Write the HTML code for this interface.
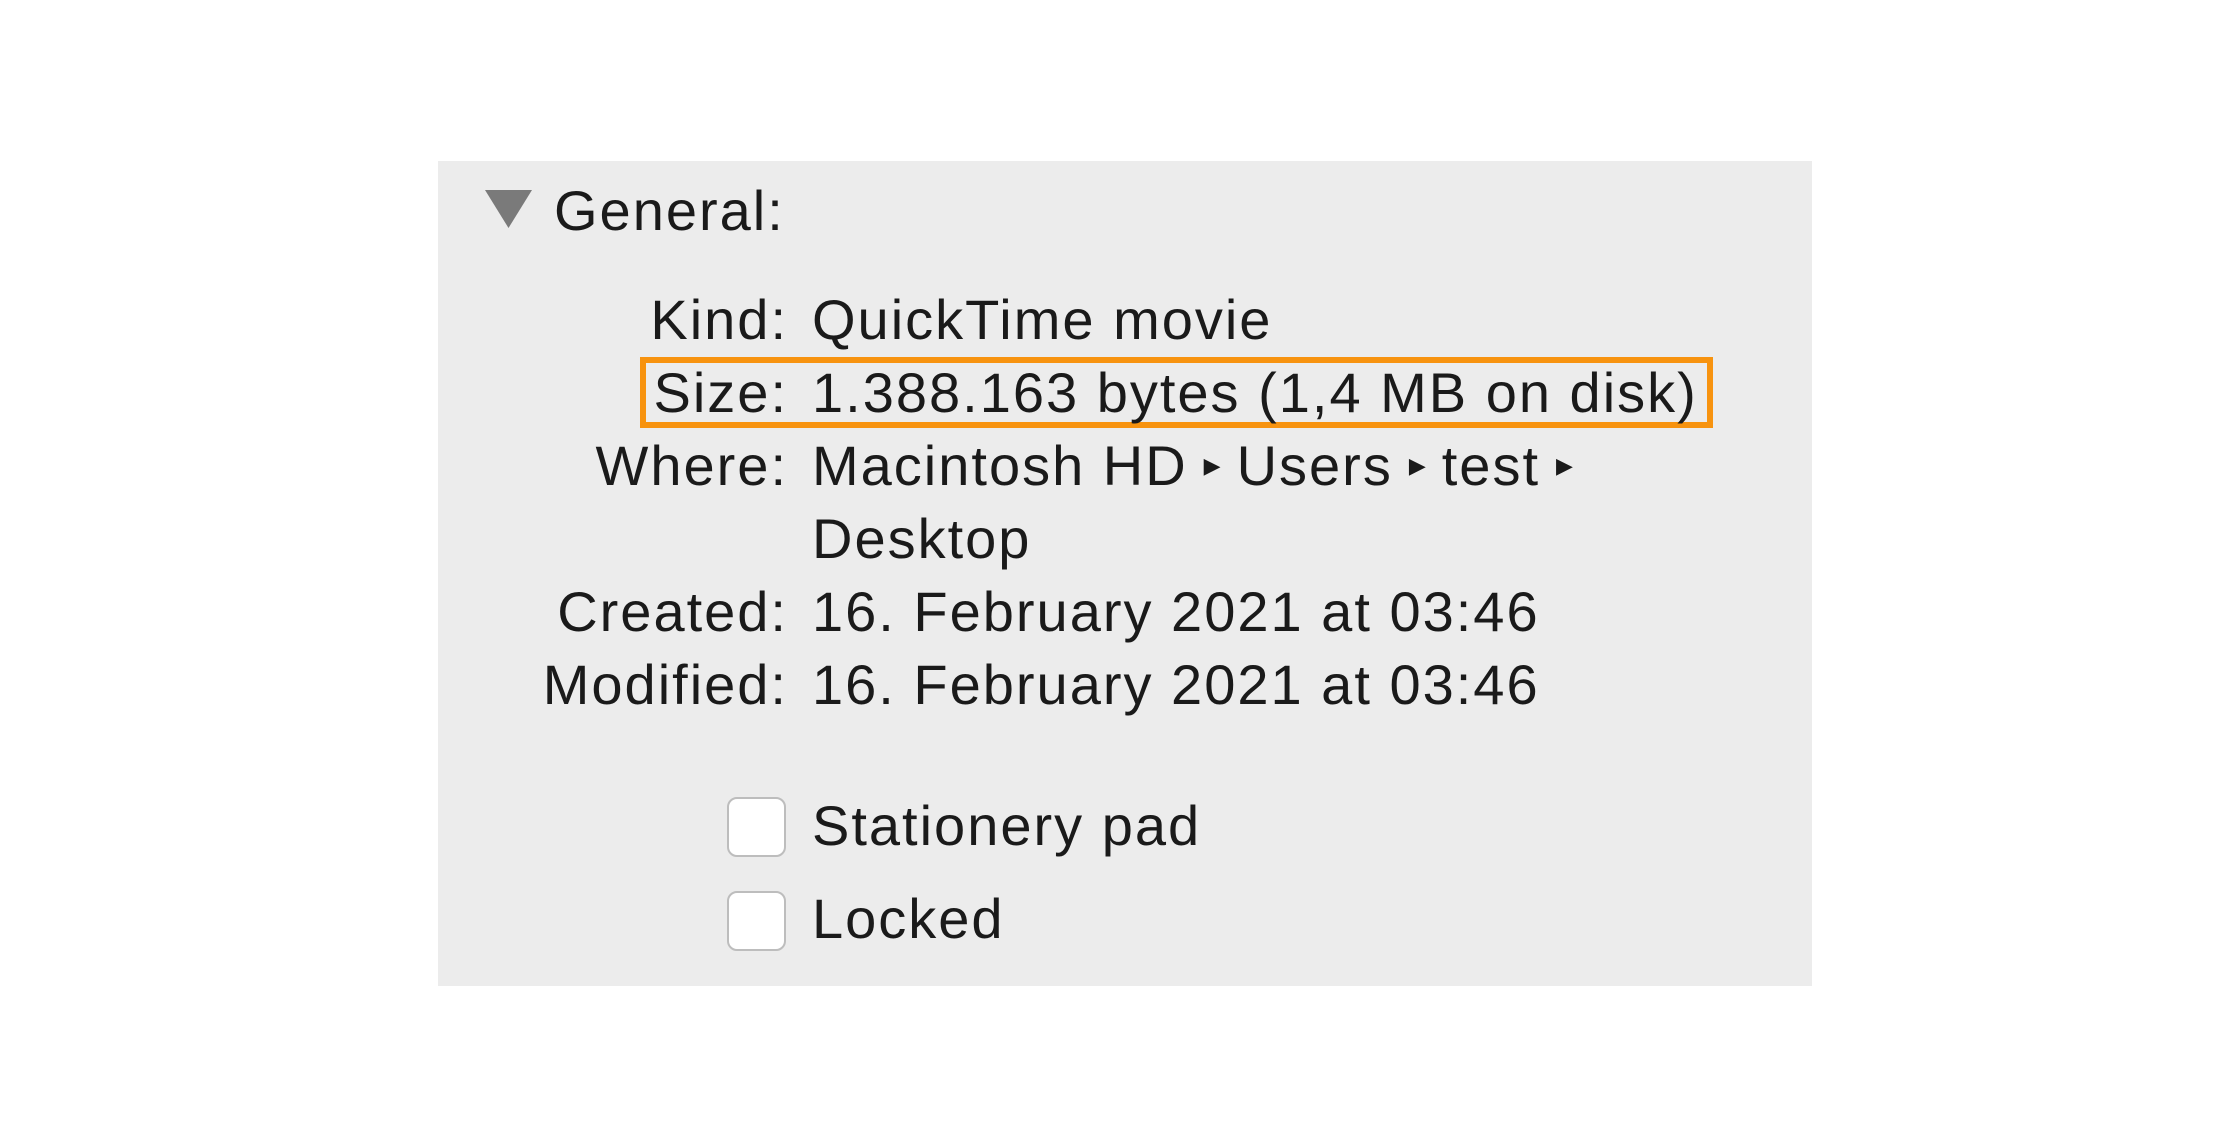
<!DOCTYPE html>
<html><head><meta charset="utf-8"><style>
html,body{margin:0;padding:0;background:#fff;width:2220px;height:1137px;overflow:hidden}
body{position:relative;font-family:"Liberation Sans",sans-serif;color:#1a1a1a}
.panel{position:absolute;left:438px;top:161px;width:1374px;height:825px;background:#ececec}
.t{position:absolute;font-size:56px;line-height:1;white-space:nowrap;letter-spacing:2px}
.lab{position:absolute;right:1432px;text-align:right;font-size:56px;white-space:nowrap;line-height:1;letter-spacing:2px}
.val{position:absolute;left:812px;font-size:56px;white-space:nowrap;line-height:1;letter-spacing:2px}
.box{position:absolute;left:640px;top:357px;width:1073px;height:71px;border:6px solid #f7930f;box-sizing:border-box}
.cb{position:absolute;left:727px;width:59px;height:60px;background:#fff;border:2px solid #bdbdbd;border-radius:10px;box-sizing:border-box}
.arr{font-size:22px;vertical-align:middle;position:relative;top:-4px;margin:0 16px;letter-spacing:0}
</style></head><body>
<div class="panel"></div>
<svg style="position:absolute;left:485px;top:190px" width="47" height="38"><polygon points="0,0 47,0 23.5,38" fill="#7a7a7a"/></svg>
<div class="t" style="left:554px;top:183px">General:</div>
<div class="box"></div>
<div class="lab" style="top:292px">Kind:</div><div class="val" style="top:292px">QuickTime movie</div>
<div class="lab" style="top:365px">Size:</div><div class="val" style="top:365px">1.388.163 bytes (1,4 MB on disk)</div>
<div class="lab" style="top:438px">Where:</div><div class="val" style="top:438px">Macintosh HD<span class="arr">▶</span>Users<span class="arr">▶</span>test<span class="arr">▶</span></div>
<div class="val" style="top:511px">Desktop</div>
<div class="lab" style="top:584px">Created:</div><div class="val" style="top:584px">16. February 2021 at 03:46</div>
<div class="lab" style="top:657px">Modified:</div><div class="val" style="top:657px">16. February 2021 at 03:46</div>
<div class="cb" style="top:797px"></div><div class="val" style="top:798px">Stationery pad</div>
<div class="cb" style="top:891px"></div><div class="val" style="top:891px">Locked</div>
</body></html>
